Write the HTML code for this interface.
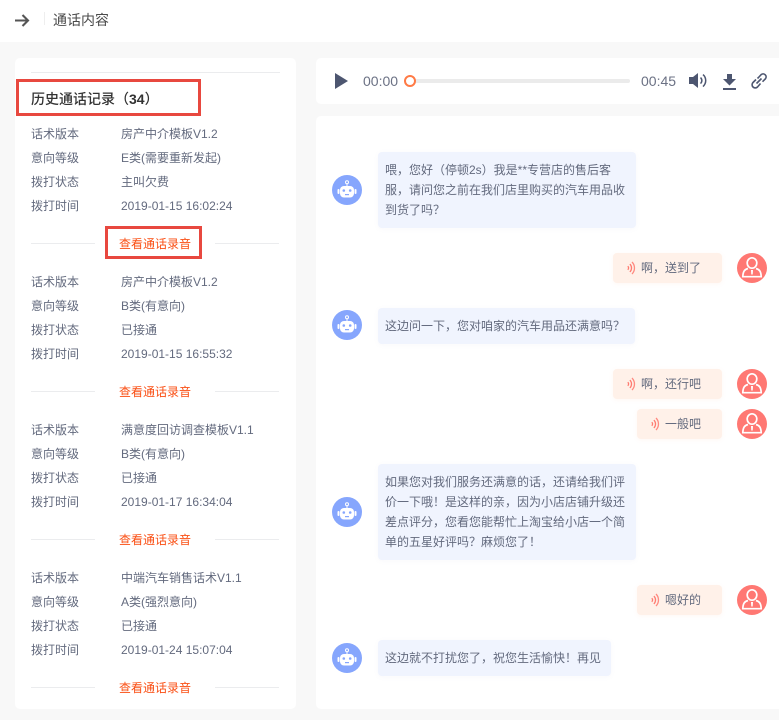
<!DOCTYPE html>
<html lang="zh-CN"><head><meta charset="utf-8">
<style>
*{box-sizing:border-box;margin:0;padding:0}
html,body{width:779px;height:720px;overflow:hidden;background:#f8f8f8}
body{position:relative;font-family:"Liberation Sans","Noto Sans CJK SC",sans-serif;font-size:12px;color:#636a7e}
.a{position:absolute;white-space:nowrap}
.w{position:absolute;background:#fff;border-radius:5px}
.l{position:absolute;height:1px;background:#ebecee}
.t{position:absolute;line-height:20px;height:20px;white-space:nowrap}
.lk{position:absolute;left:119px;color:#fa4f14;line-height:20px;white-space:nowrap;width:84px}
.b{position:absolute;background:#f0f4fe;border-radius:4px;line-height:20px;padding:8px 7px;color:#636a7e;box-shadow:0 1px 4px rgba(160,170,200,.08);white-space:nowrap}
.u{position:absolute;background:#fff1e9;border-radius:4px;height:30px;line-height:30px;right:57px;padding-left:28px;padding-right:21px;white-space:nowrap;box-shadow:0 1px 4px rgba(255,180,140,.1)}
.u svg{position:absolute;left:12px;top:8px}
.av{position:absolute;width:30px;height:30px}
.red{position:absolute;border:3px solid #e8483f}
</style></head><body>
<svg width="0" height="0" style="position:absolute"><defs>
<symbol id="bot" viewBox="0 0 30 30"><circle cx="15" cy="15" r="15" fill="#86a6fd"/>
<circle cx="15" cy="7.300" r="1.500" fill="none" stroke="#fff" stroke-width="1"/><rect x="14.500" y="8.500" width="1" height="2.500" fill="#fff"/>
<rect x="8" y="11" width="14" height="11.500" rx="4" fill="#fff"/><rect x="5.500" y="14" width="2" height="5" rx="1" fill="#fff"/><rect x="22.500" y="14" width="2" height="5" rx="1" fill="#fff"/>
<circle cx="11.800" cy="15.500" r="1.300" fill="#86a6fd"/><circle cx="18.200" cy="15.500" r="1.300" fill="#86a6fd"/><rect x="13" y="19" width="4" height="1.200" fill="#86a6fd"/></symbol>
<symbol id="usr" viewBox="0 0 30 30"><circle cx="15" cy="15" r="15" fill="#ff7873"/>
<ellipse cx="15" cy="10" rx="4.800" ry="5.200" fill="none" stroke="#fff" stroke-width="1.700"/>
<path d="M11 15.500C7.500 16.500 6 18.500 5.800 23.700H24.200C24 18.500 22.500 16.500 19 15.500" fill="none" stroke="#fff" stroke-width="1.700"/>
<path d="M14 17h2l-.3 4.500h-1.400z" fill="#fff"/></symbol>
<symbol id="wave" viewBox="0 0 12 14"><path d="M2.800 5.200a2.500 2.500 0 0 1 0 3.600" fill="none" stroke="#ff7b70" stroke-width="1.300"/><path d="M4.900 3.100a5.500 5.500 0 0 1 0 7.800" fill="none" stroke="#ff7b70" stroke-width="1.300"/><path d="M7 1a8.500 8.500 0 0 1 0 12" fill="none" stroke="#ff8a80" stroke-width="1.300"/></symbol>
</defs></svg>

<div class="a" style="left:0;top:0;width:779px;height:42px;background:#fff"></div>
<svg class="a" style="left:15px;top:13px" width="15" height="15" viewBox="0 0 15 15"><path d="M0 7.500H13M7.500 2L13 7.500 7.500 13" fill="none" stroke="#555" stroke-width="2.100"/></svg>
<div class="a" style="left:44px;top:12px;width:1px;height:13px;background:#eee"></div>
<div class="a" style="left:53px;top:10px;font-size:14px;line-height:20px;color:#4a4a4a">通话内容</div>

<div class="w" style="left:15px;top:58px;width:281px;height:651px"></div>
<div class="l" style="left:31px;top:72px;width:249px"></div>
<div class="a" style="left:31px;top:89px;font-size:14px;line-height:20px;font-weight:500;color:#333">历史通话记录（<b>34</b>）</div>
<div class="red" style="left:16px;top:79px;width:185px;height:37px"></div>

<div class="t" style="left:31px;top:124px">话术版本</div><div class="t" style="left:121px;top:124px">房产中介模板V1.2</div>
<div class="t" style="left:31px;top:148px">意向等级</div><div class="t" style="left:121px;top:148px">E类(需要重新发起)</div>
<div class="t" style="left:31px;top:172px">拨打状态</div><div class="t" style="left:121px;top:172px">主叫欠费</div>
<div class="t" style="left:31px;top:196px">拨打时间</div><div class="t" style="left:121px;top:196px">2019-01-15 16:02:24</div>
<div class="l" style="left:31px;top:243px;width:64px"></div><div class="l" style="left:215px;top:243px;width:64px"></div>
<div class="lk" style="top:234px">查看通话录音</div>
<div class="red" style="left:105px;top:226px;width:97px;height:33px"></div>

<div class="t" style="left:31px;top:272px">话术版本</div><div class="t" style="left:121px;top:272px">房产中介模板V1.2</div>
<div class="t" style="left:31px;top:296px">意向等级</div><div class="t" style="left:121px;top:296px">B类(有意向)</div>
<div class="t" style="left:31px;top:320px">拨打状态</div><div class="t" style="left:121px;top:320px">已接通</div>
<div class="t" style="left:31px;top:344px">拨打时间</div><div class="t" style="left:121px;top:344px">2019-01-15 16:55:32</div>
<div class="l" style="left:31px;top:391px;width:64px"></div><div class="l" style="left:215px;top:391px;width:64px"></div>
<div class="lk" style="top:382px">查看通话录音</div>

<div class="t" style="left:31px;top:420px">话术版本</div><div class="t" style="left:121px;top:420px">满意度回访调查模板V1.1</div>
<div class="t" style="left:31px;top:444px">意向等级</div><div class="t" style="left:121px;top:444px">B类(有意向)</div>
<div class="t" style="left:31px;top:468px">拨打状态</div><div class="t" style="left:121px;top:468px">已接通</div>
<div class="t" style="left:31px;top:492px">拨打时间</div><div class="t" style="left:121px;top:492px">2019-01-17 16:34:04</div>
<div class="l" style="left:31px;top:539px;width:64px"></div><div class="l" style="left:215px;top:539px;width:64px"></div>
<div class="lk" style="top:530px">查看通话录音</div>

<div class="t" style="left:31px;top:568px">话术版本</div><div class="t" style="left:121px;top:568px">中端汽车销售话术V1.1</div>
<div class="t" style="left:31px;top:592px">意向等级</div><div class="t" style="left:121px;top:592px">A类(强烈意向)</div>
<div class="t" style="left:31px;top:616px">拨打状态</div><div class="t" style="left:121px;top:616px">已接通</div>
<div class="t" style="left:31px;top:640px">拨打时间</div><div class="t" style="left:121px;top:640px">2019-01-24 15:07:04</div>
<div class="l" style="left:31px;top:687px;width:64px"></div><div class="l" style="left:215px;top:687px;width:64px"></div>
<div class="lk" style="top:678px">查看通话录音</div>

<div class="a" style="left:316px;top:58px;width:463px;height:46px;background:#fff;border-radius:5px 0 0 5px"></div>
<svg class="a" style="left:335px;top:73px" width="13" height="16" viewBox="0 0 13 16"><path d="M0 0L13 8 0 16z" fill="#4d5670"/></svg>
<div class="a" style="left:363px;top:72px;font-size:14px;line-height:18px;color:#6b7184">00:00</div>
<div class="a" style="left:410px;top:79px;width:220px;height:4px;border-radius:2px;background:#ebebeb"></div>
<div class="a" style="left:404px;top:75px;width:12px;height:12px;border-radius:50%;border:2px solid #ff7a45;background:#fff"></div>
<div class="a" style="left:641px;top:72px;font-size:14px;line-height:18px;color:#6b7184">00:45</div>
<svg class="a" style="left:688px;top:72px" width="20" height="17" viewBox="0 0 20 17"><path d="M1 5h4l5-4v15l-5-4H1z" fill="#4d5670"/><path d="M12.500 5.500a4 4 0 0 1 0 6" fill="none" stroke="#4d5670" stroke-width="1.500"/><path d="M15 2.500a8 8 0 0 1 0 12" fill="none" stroke="#4d5670" stroke-width="1.500"/></svg>
<svg class="a" style="left:722px;top:73px" width="15" height="18" viewBox="0 0 15 18"><path d="M5 1h5v5h4l-6.500 6.500L1 6h4z" fill="#4d5670"/><rect x="1" y="15" width="13" height="2" fill="#4d5670"/></svg>
<svg class="a" style="left:750px;top:72px" width="18" height="18" viewBox="0 0 18 18" fill="none" stroke="#4d5670" stroke-width="1.600"><path d="M7.500 6.500l1-1 2.800-3a3 3 0 0 1 4.200 4.200l-3 3"/><path d="M10.500 11.500l-3 3.500a3 3 0 0 1-4.500-4.500l3-3"/><path d="M6.500 11.500l5-5"/></svg>

<div class="a" style="left:316px;top:116px;width:463px;height:593px;background:#fff;border-radius:5px 0 0 5px"></div>

<svg class="av" style="left:332px;top:175px"><use href="#bot"/></svg>
<div class="b" style="left:378px;top:152px;width:258px;height:76px">喂，您好（停顿2s）我是**专营店的售后客<br>服，请问您之前在我们店里购买的汽车用品收<br>到货了吗？</div>

<div class="u" style="top:253px"><svg width="12" height="14"><use href="#wave"/></svg>啊，送到了</div>
<svg class="av" style="left:737px;top:253px"><use href="#usr"/></svg>

<svg class="av" style="left:332px;top:310px"><use href="#bot"/></svg>
<div class="b" style="left:378px;top:308px;width:257px;height:36px">这边问一下，您对咱家的汽车用品还满意吗？</div>

<div class="u" style="top:369px"><svg width="12" height="14"><use href="#wave"/></svg>啊，还行吧</div>
<svg class="av" style="left:737px;top:369px"><use href="#usr"/></svg>
<div class="u" style="top:409px"><svg width="12" height="14"><use href="#wave"/></svg>一般吧</div>
<svg class="av" style="left:737px;top:409px"><use href="#usr"/></svg>

<svg class="av" style="left:332px;top:497px"><use href="#bot"/></svg>
<div class="b" style="left:378px;top:464px;width:258px;height:96px">如果您对我们服务还满意的话，还请给我们评<br>价一下哦！是这样的亲，因为小店店铺升级还<br>差点评分，您看您能帮忙上淘宝给小店一个简<br>单的五星好评吗？麻烦您了！</div>

<div class="u" style="top:585px"><svg width="12" height="14"><use href="#wave"/></svg>嗯好的</div>
<svg class="av" style="left:737px;top:585px"><use href="#usr"/></svg>

<svg class="av" style="left:332px;top:643px"><use href="#bot"/></svg>
<div class="b" style="left:378px;top:640px;width:233px;height:36px">这边就不打扰您了，祝您生活愉快！再见</div>
</body></html>
